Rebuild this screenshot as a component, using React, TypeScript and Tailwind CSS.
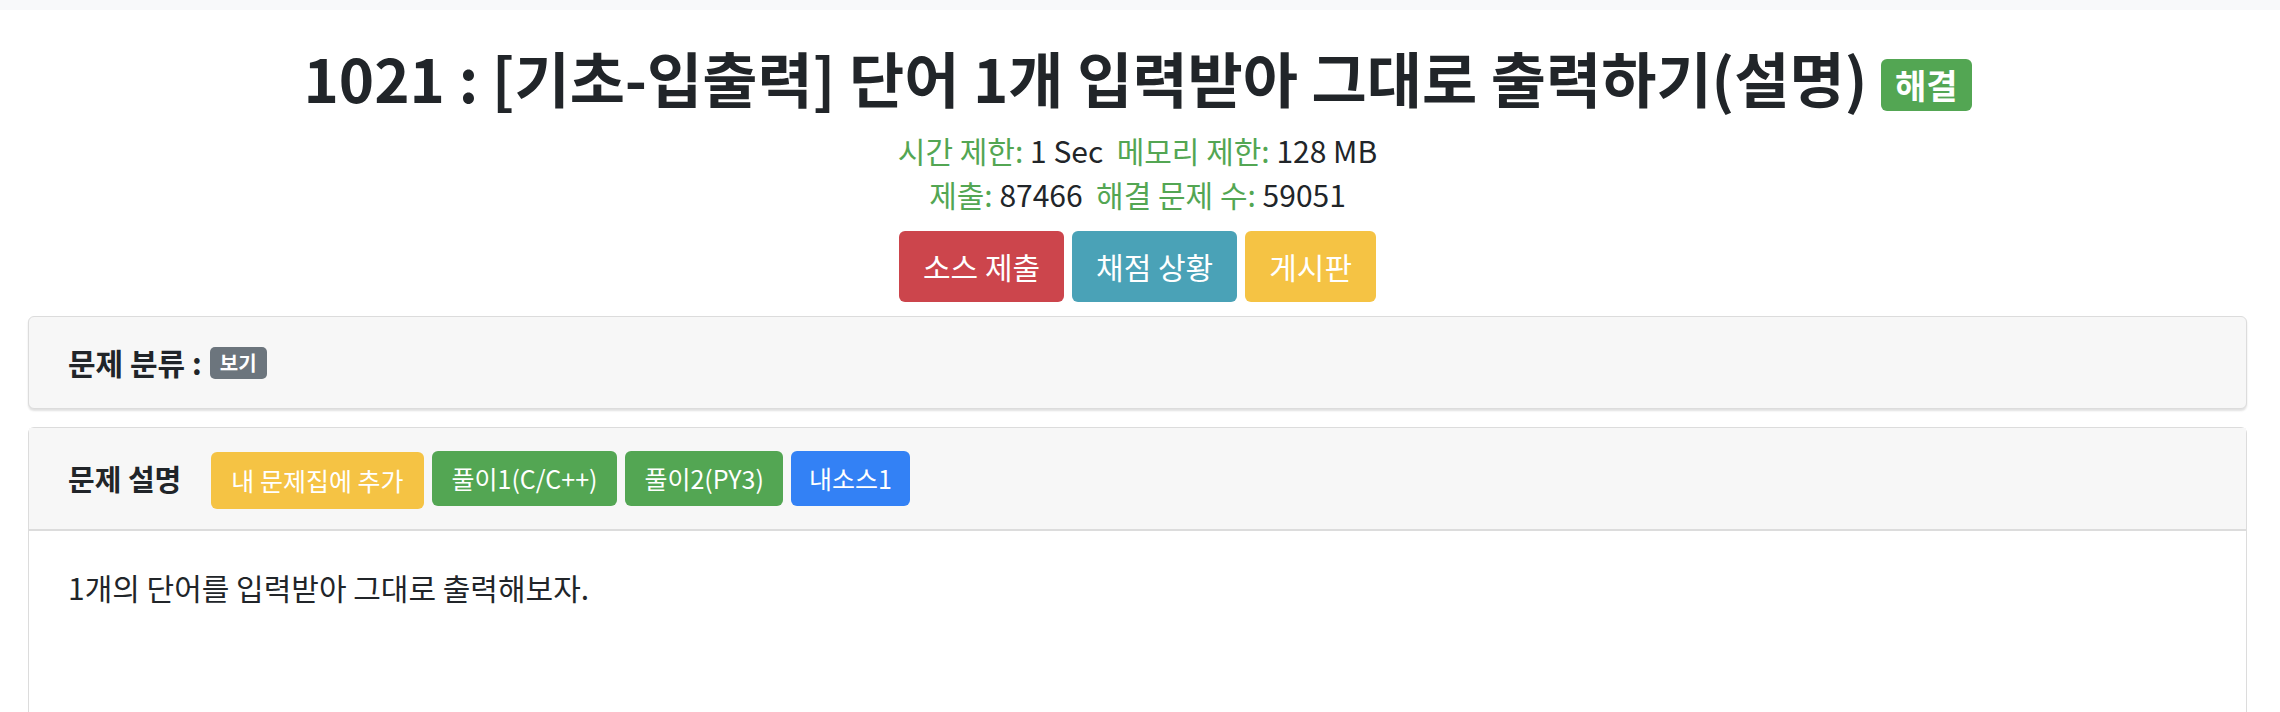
import React from 'react';

const infoLabel = 'text-[#53a653]';

function ProblemHeader() {
  return (
    <div className="text-center">
      <h1 className="pt-[31px] text-[60px] font-bold leading-[72px] text-[#212529]">
        1021 : [기초-입출력] 단어 1개 입력받아 그대로 출력하기(설명){' '}
        <span className="relative top-[-2px] inline-block rounded-[6px] bg-[#53a653] px-[14px] py-[9px] align-middle text-[34px] leading-none text-white">
          해결
        </span>
      </h1>
      <div className="mt-[15px] text-[30px] leading-[44px]">
        <div>
          <span className={infoLabel}>시간 제한:</span> 1 Sec&nbsp;&nbsp;
          <span className={infoLabel}>메모리 제한:</span> 128 MB
        </div>
        <div>
          <span className={infoLabel}>제출:</span> 87466&nbsp;&nbsp;
          <span className={infoLabel}>해결 문제 수:</span> 59051
        </div>
      </div>
      <div className="mt-[15px] flex justify-center gap-[8px]">
        <button className="h-[71px] rounded-[6px] bg-[#cc454c] px-[24px] text-[30px] text-white">소스 제출</button>
        <button className="h-[71px] rounded-[6px] bg-[#4aa2b7] px-[24px] text-[30px] text-white">채점 상황</button>
        <button className="h-[71px] rounded-[6px] bg-[#f5c344] px-[24px] text-[30px] text-white">게시판</button>
      </div>
    </div>
  );
}

export default function App() {
  return (
    <div className="min-h-screen bg-white font-['Noto_Sans_CJK_KR',sans-serif] text-[#212529]">
      <div className="h-[10px] bg-[#f8f9fa]" />
      <div className="pl-[28px] pr-[33px]">
        <ProblemHeader />

        <div className="mt-[14px] flex h-[93px] items-center rounded-[6px] border border-[#dcdcdc] bg-[#f7f7f7] pl-[39px] shadow-[0_2px_2px_rgba(0,0,0,0.12)]">
          <span className="text-[30px] font-bold">문제 분류 :</span>
          <span className="ml-[8px] rounded-[5px] bg-[#6c757d] px-[10px] py-[5px] text-[20px] font-bold leading-[22px] text-white">보기</span>
        </div>

        <div className="mt-[18px] rounded-t-[6px] border border-b-0 border-[#dcdcdc]">
          <div className="flex h-[103px] items-center border-b-2 border-[#dcdcdc] bg-[#f7f7f7] pl-[39px]">
            <span className="text-[29px] font-bold">문제 설명</span>
            <div className="ml-[30px] flex items-center gap-[8px]">
              <button className="relative top-[2px] h-[57px] rounded-[6px] bg-[#f5c344] px-[20px] text-[25px] text-white">내 문제집에 추가</button>
              <button className="h-[55px] rounded-[6px] bg-[#53a653] px-[20px] text-[25px] text-white">풀이1(C/C++)</button>
              <button className="h-[55px] rounded-[6px] bg-[#53a653] px-[19px] text-[25px] text-white">풀이2(PY3)</button>
              <button className="h-[55px] rounded-[6px] bg-[#3381f5] px-[18px] text-[25px] text-white">내소스1</button>
            </div>
          </div>
          <div className="h-[300px] bg-white pl-[39px] pt-[38px]">
            <p className="text-[30px] leading-[36px]">1개의 단어를 입력받아 그대로 출력해보자.</p>
          </div>
        </div>
      </div>
    </div>
  );
}
